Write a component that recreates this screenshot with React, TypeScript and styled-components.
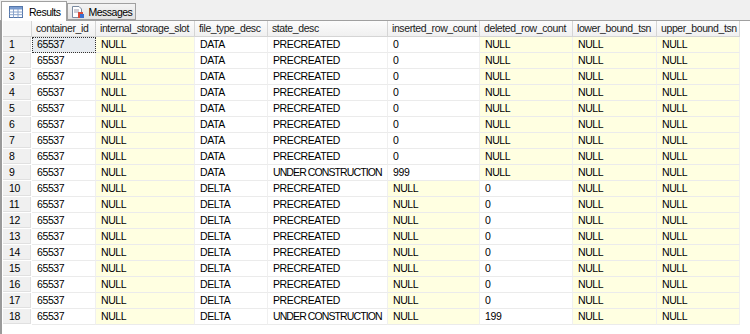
import styled, { createGlobalStyle } from "styled-components";

const GlobalStyle = createGlobalStyle`
  html, body {
    margin: 0;
    padding: 0;
    background: #ffffff;
  }
  body {
    font-family: "Liberation Sans", Arial, sans-serif;
    font-size: 10.5px;
    letter-spacing: -0.4px;
    color: #000;
  }
`;

const columns = [
  { name: "container_id", width: 64 },
  { name: "internal_storage_slot", width: 99 },
  { name: "file_type_desc", width: 73 },
  { name: "state_desc", width: 120 },
  { name: "inserted_row_count", width: 92 },
  { name: "deleted_row_count", width: 93 },
  { name: "lower_bound_tsn", width: 84 },
  { name: "upper_bound_tsn", width: 83 },
];

type Row = string[];

const rows: Row[] = [];
for (let i = 0; i < 18; i++) {
  const delta = i >= 9;
  const building = i === 8 || i === 17;
  rows.push([
    "65537",
    "NULL",
    delta ? "DELTA" : "DATA",
    building ? "UNDER CONSTRUCTION" : "PRECREATED",
    delta ? "NULL" : building ? "999" : "0",
    delta ? (building ? "199" : "0") : "NULL",
    "NULL",
    "NULL",
  ]);
}

const Page = styled.div`
  width: 750px;
  height: 334px;
  overflow: hidden;
  display: flex;
  flex-direction: column;
`;

const TabBar = styled.div`
  height: 21px;
  background: #f0f0f0;
  border-bottom: 1px solid #a0a0a0;
  display: flex;
  align-items: flex-end;
  padding-left: 1px;
  box-sizing: border-box;
`;

const Tab = styled.div<{ $active?: boolean }>`
  height: ${(p) => (p.$active ? "20px" : "17px")};
  flex-shrink: 0;
  margin-bottom: ${(p) => (p.$active ? "-1px" : "0")};
  box-sizing: border-box;
  border: 1px solid #a0a0a0;
  border-bottom: ${(p) => (p.$active ? "none" : "1px solid #a0a0a0")};
  background: ${(p) => (p.$active ? "#ffffff" : "linear-gradient(#f4f4f4, #e2e2e2)")};
  display: flex;
  align-items: center;
  gap: ${(p) => (p.$active ? "6px" : "4px")};
  padding: ${(p) => (p.$active ? "0 5px 0 7px" : "0 3px 0 3px")};
  font-size: 10.5px;
  letter-spacing: -0.5px;
  color: #000;
  white-space: nowrap;

  svg {
    flex-shrink: 0;
  }
`;

const GridArea = styled.div`
  flex: 1;
  border-left: 2px solid #9a9a9a;
  background: #ffffff;
  display: flex;
  flex-direction: column;
`;

const Table = styled.div`
  display: grid;
  grid-template-columns: 29px ${columns.map((c) => c.width + "px").join(" ")};
  grid-auto-rows: 16px;
  padding-left: 1px;
  width: max-content;
`;

const HeadCell = styled.div<{ $corner?: boolean }>`
  background: linear-gradient(#fcfcfc, #f0f0f0);
  border-right: 1px solid #d5d5d5;
  border-bottom: 1px solid #d5d5d5;
  padding-left: 4px;
  line-height: 15px;
  white-space: nowrap;
  overflow: hidden;
  color: #1a1a1a;
  ${(p) => (p.$corner ? "background: #f7f7f7;" : "")}
`;

const RowNum = styled.div`
  background: #f0f0f0;
  border-right: 1px solid #ffffff;
  border-bottom: 1px solid #ffffff;
  box-shadow: inset -1px -1px 0 #e0e0e0;
  padding-left: 6px;
  line-height: 15px;
`;

const Cell = styled.div<{ $null?: boolean; $selected?: boolean; $tight?: boolean }>`
  background: ${(p) => (p.$selected ? "#e8ecf0" : p.$null ? "#ffffe1" : "#ffffff")};
  border-right: 1px solid #f0f0f0;
  border-bottom: 1px solid #ebebeb;
  padding-left: 5px;
  line-height: 15px;
  white-space: nowrap;
  overflow: hidden;
  box-sizing: border-box;
  letter-spacing: ${(p) => (p.$tight ? "-0.9px" : "-0.4px")};
  ${(p) => (p.$selected ? "outline: 1px dotted #333; outline-offset: -1px;" : "")}
`;

const ResultsIcon = () => (
  <svg width="14" height="12" viewBox="0 0 14 12">
    <rect x="0.5" y="0.5" width="13" height="11" fill="#ffffff" stroke="#5577aa" />
    <rect x="1" y="1" width="12" height="2.5" fill="#7a9cd0" />
    <line x1="0.5" y1="6" x2="13.5" y2="6" stroke="#8aa4cc" />
    <line x1="0.5" y1="8.7" x2="13.5" y2="8.7" stroke="#8aa4cc" />
    <line x1="4.5" y1="3" x2="4.5" y2="11.5" stroke="#8aa4cc" />
    <line x1="9" y1="3" x2="9" y2="11.5" stroke="#8aa4cc" />
  </svg>
);

const MessagesIcon = () => (
  <svg width="14" height="14" viewBox="0 0 14 14">
    <path d="M1.5 1.5 H8 L10.5 4 V12.5 H1.5 Z" fill="#ffffff" stroke="#7a8aa0" />
    <line x1="3" y1="5" x2="8" y2="5" stroke="#99a" />
    <line x1="3" y1="7" x2="8" y2="7" stroke="#99a" />
    <rect x="7" y="7" width="5" height="6" fill="#d84a3a" />
    <rect x="9" y="9" width="4" height="4" fill="#3a6fd0" />
  </svg>
);

function App() {
  return (
    <Page>
      <GlobalStyle />
      <TabBar>
        <Tab $active>
          <ResultsIcon />
          Results
        </Tab>
        <Tab>
          <MessagesIcon />
          Messages
        </Tab>
      </TabBar>
      <GridArea>
        <Table>
          <HeadCell $corner />
          {columns.map((c) => (
            <HeadCell key={c.name}>{c.name}</HeadCell>
          ))}
          {rows.map((r, i) => (
            <>
              <RowNum key={`n-${i}`}>{i + 1}</RowNum>
              {r.map((v, j) => (
                <Cell
                  key={`c-${i}-${j}`}
                  $null={v === "NULL"}
                  $selected={i === 0 && j === 0}
                  $tight={v.length > 12}
                >
                  {v}
                </Cell>
              ))}
            </>
          ))}
        </Table>
      </GridArea>
    </Page>
  );
}

export default App;
